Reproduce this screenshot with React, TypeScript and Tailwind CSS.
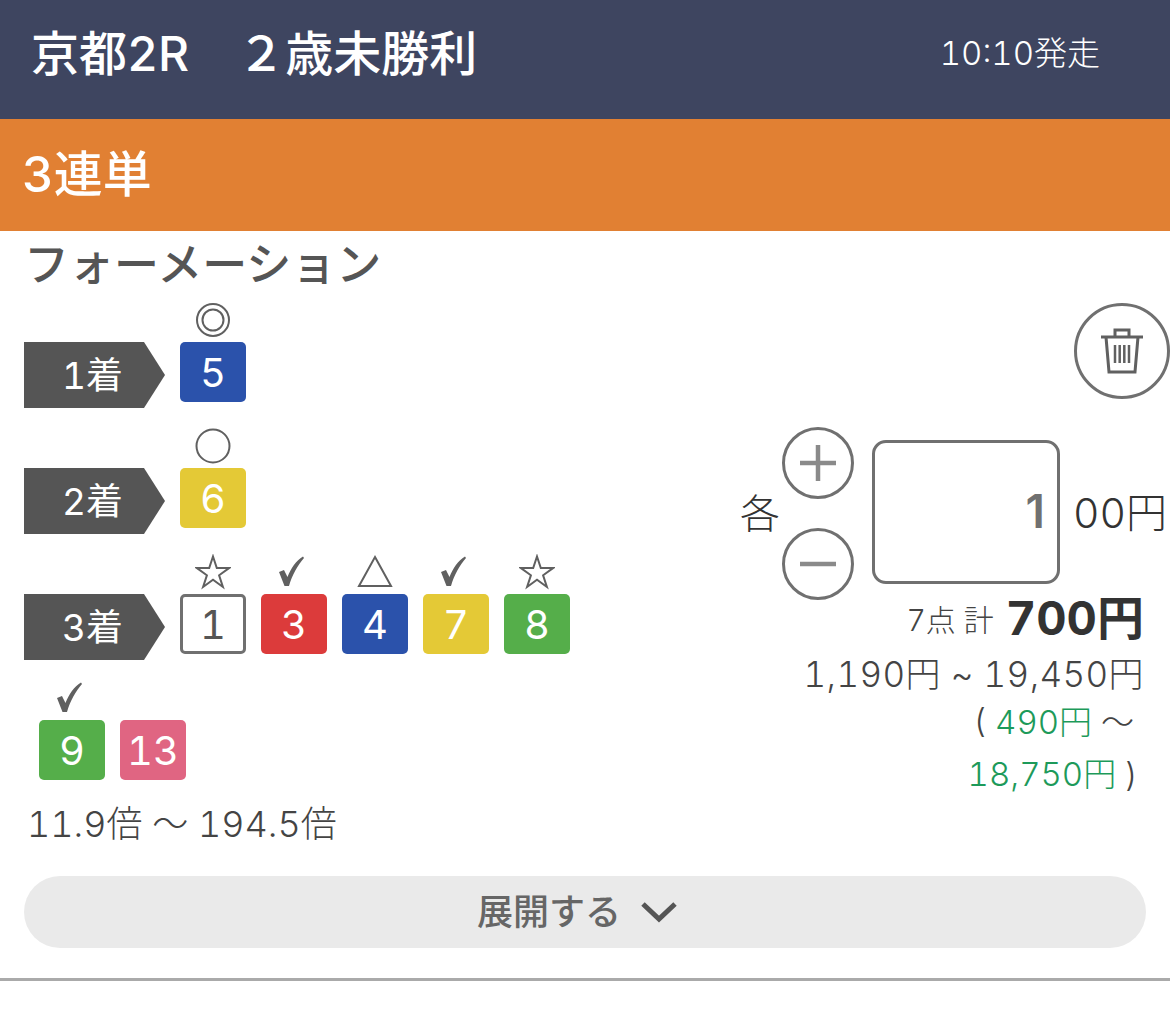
const Mark = ({ kind }: { kind: string }) => {
  return (
    <svg width="36" height="36" viewBox="0 0 36 36" fill="none" stroke="#606060" strokeWidth="2">
      {kind === "double" && (
        <>
          <ellipse cx="18" cy="18" rx="16" ry="16" />
          <ellipse cx="18" cy="18" rx="10.5" ry="10.5" />
        </>
      )}
      {kind === "circle" && <circle cx="18" cy="18" r="16.5" />}
      {kind === "star" && (
        <path d="M18 2.5l3.8 11.6H34l-9.900 7.200 3.800 11.700L18 25.800 8.100 33l3.800-11.700L2 14.100h12.200z" />
      )}
      {kind === "check" && (
        <path d="M3 18l5-2 3.500 7C15 14 20 7 27 2.500l1 1.500C22 11 16 21 13 32H8.500z" fill="#606060" stroke="none" />
      )}
      {kind === "tri" && <path d="M18 3l16 29H2z" />}
    </svg>
  );
};

const Num = ({ n, bg, mark }: { n: number; bg: string; mark?: string }) => {
  return (
    <div className="ml-[15px] flex h-[126px] w-[66px] flex-col items-center">
      <div className="flex h-[34px] w-full items-center justify-center">{mark && <Mark kind={mark} />}</div>
      <div
        className={`mt-[5px] flex h-[60px] w-[66px] items-center justify-center rounded-[5px] pt-[2px] text-[40px] leading-none ${bg}`}
      >
        {n}
      </div>
    </div>
  );
};

const Label = ({ text }: { text: string }) => {
  return (
    <div className="h-[126px] w-[141px] pt-[39px]">
      <div className="flex h-[66px] w-[141px] items-center justify-center pt-[2px] pr-[4px] text-[37px] text-white bg-[#555] [clip-path:polygon(0_0,120px_0,141px_50%,120px_100%,0_100%)]">
        {text}
      </div>
    </div>
  );
};

const TrashIcon = () => {
  return (
    <svg width="44" height="48" viewBox="0 0 44 48" fill="none" stroke="#606060" strokeWidth="3">
      <path d="M1 10h42" />
      <path d="M15 9V3h14v6" />
      <path d="M6 10l3 35h26l3-35" />
      <path d="M15 18v18M19.700 18v18M24.300 18v18M29 18v18" strokeWidth="2.500" />
    </svg>
  );
};

const CircleButton = ({ d }: { d: string }) => {
  return (
    <div className="flex size-[72px] items-center justify-center rounded-full border-[3px] border-[#707070]">
      <svg width="36" height="36" viewBox="0 0 36 36" fill="none" stroke="#8a8a8a" strokeWidth="4.500">
        <path d={d} />
      </svg>
    </div>
  );
};

export default function App() {
  return (
    <div className="h-[1019px] w-[1170px] overflow-hidden bg-white font-['Inter','Noto_Sans_CJK_JP',sans-serif] text-[#333] tabular-nums">
      <header className="flex h-[119px] items-center justify-between bg-[#3e4560] pr-[70px] pl-[31px] text-white">
        <h1 className="pb-[12px] text-[48px] font-medium whitespace-nowrap">京都2R　２歳未勝利</h1>
        <span className="pb-[12px] text-[33px] font-light">10:10発走</span>
      </header>
      <div className="flex h-[112px] items-center bg-[#e18033] pl-[22px] text-[49px] font-medium text-white">
        3連単
      </div>
      <div className="flex justify-between">
        <div className="w-[620px] pl-[24px]">
          <h2 className="h-[72px] pt-[4px] text-[45px] leading-[60px] font-medium whitespace-nowrap text-[#555]">
            フォーメーション
          </h2>
          <div className="flex w-[570px] flex-wrap">
            <Label text="1着" />
            <Num n={5} mark="double" bg="bg-[#2b52ab] text-white" />
            <div className="basis-full" />
            <Label text="2着" />
            <Num n={6} mark="circle" bg="bg-[#e4c936] text-white" />
            <div className="basis-full" />
            <Label text="3着" />
            <Num n={1} mark="star" bg="border-[3px] border-[#707070] bg-white text-[#555]" />
            <Num n={3} mark="check" bg="bg-[#dc3b3b] text-white" />
            <Num n={4} mark="tri" bg="bg-[#2b52ab] text-white" />
            <Num n={7} mark="check" bg="bg-[#e4c936] text-white" />
            <Num n={8} mark="star" bg="bg-[#55ae4a] text-white" />
            <Num n={9} mark="check" bg="bg-[#55ae4a] text-white" />
            <Num n={13} bg="bg-[#e06582] text-white" />
          </div>
          <p className="pl-[3px] text-[36px] leading-[34px] font-light whitespace-nowrap text-[#444]">
            11.9倍 〜 194.5倍
          </p>
        </div>
        <div className="flex w-[430px] flex-col items-end pt-[72px]">
          <div className="flex size-[96px] items-center justify-center rounded-full border-[3px] border-[#707070]">
            <TrashIcon />
          </div>
          <div className="mt-[28px] flex w-full items-center">
            <span className="w-[42px] text-[40px] leading-none font-light">各</span>
            <div className="flex flex-col gap-[29px]">
              <CircleButton d="M0 18h36M18 0v36" />
              <CircleButton d="M0 18h36" />
            </div>
            <div className="mr-[13px] mb-[4px] ml-[18px] flex h-[144px] w-[188px] items-center justify-end rounded-[14px] border-[3px] border-[#707070] pr-[12px] text-[46px] font-semibold text-[#707070] [font-variant-numeric:proportional-nums]">
              1
            </div>
            <span className="text-[41px] leading-none font-light whitespace-nowrap">00円</span>
          </div>
          <div className="mt-[-13px] flex h-[60px] items-center pr-[26px]">
            <span className="pt-[6px] text-[30px] font-light text-[#444]">7点 計</span>
            <span className="ml-[12px] text-[47px] leading-none font-bold">700円</span>
          </div>
          <p className="mt-[2px] pr-[26px] text-[35px] leading-[50px] font-light tracking-[0.4px] whitespace-nowrap text-[#444]">
            1,190円 ~ 19,450円
          </p>
          <p className="mt-[-3px] pr-[36px] text-[33px] leading-[52px] font-light whitespace-nowrap text-[#444]">
            ( <span className="text-[#1d9a5a]">490円</span> 〜
          </p>
          <p className="pr-[32px] text-[33px] leading-[52px] font-light whitespace-nowrap text-[#444]">
            <span className="text-[#1d9a5a]">18,750円</span> )
          </p>
        </div>
      </div>
      <div className="mx-[24px] mt-[35px] flex h-[72px] items-center justify-center gap-[20px] rounded-full bg-[#eaeaea] pr-[16px] text-[36px] font-medium text-[#666]">
        展開する
        <svg width="36" height="22" viewBox="0 0 36 22" fill="none" stroke="#555" strokeWidth="5">
          <path d="M2 3l16 15L34 3" />
        </svg>
      </div>
      <div className="mt-[30px] h-[3px] bg-[#aaa]" />
    </div>
  );
}
